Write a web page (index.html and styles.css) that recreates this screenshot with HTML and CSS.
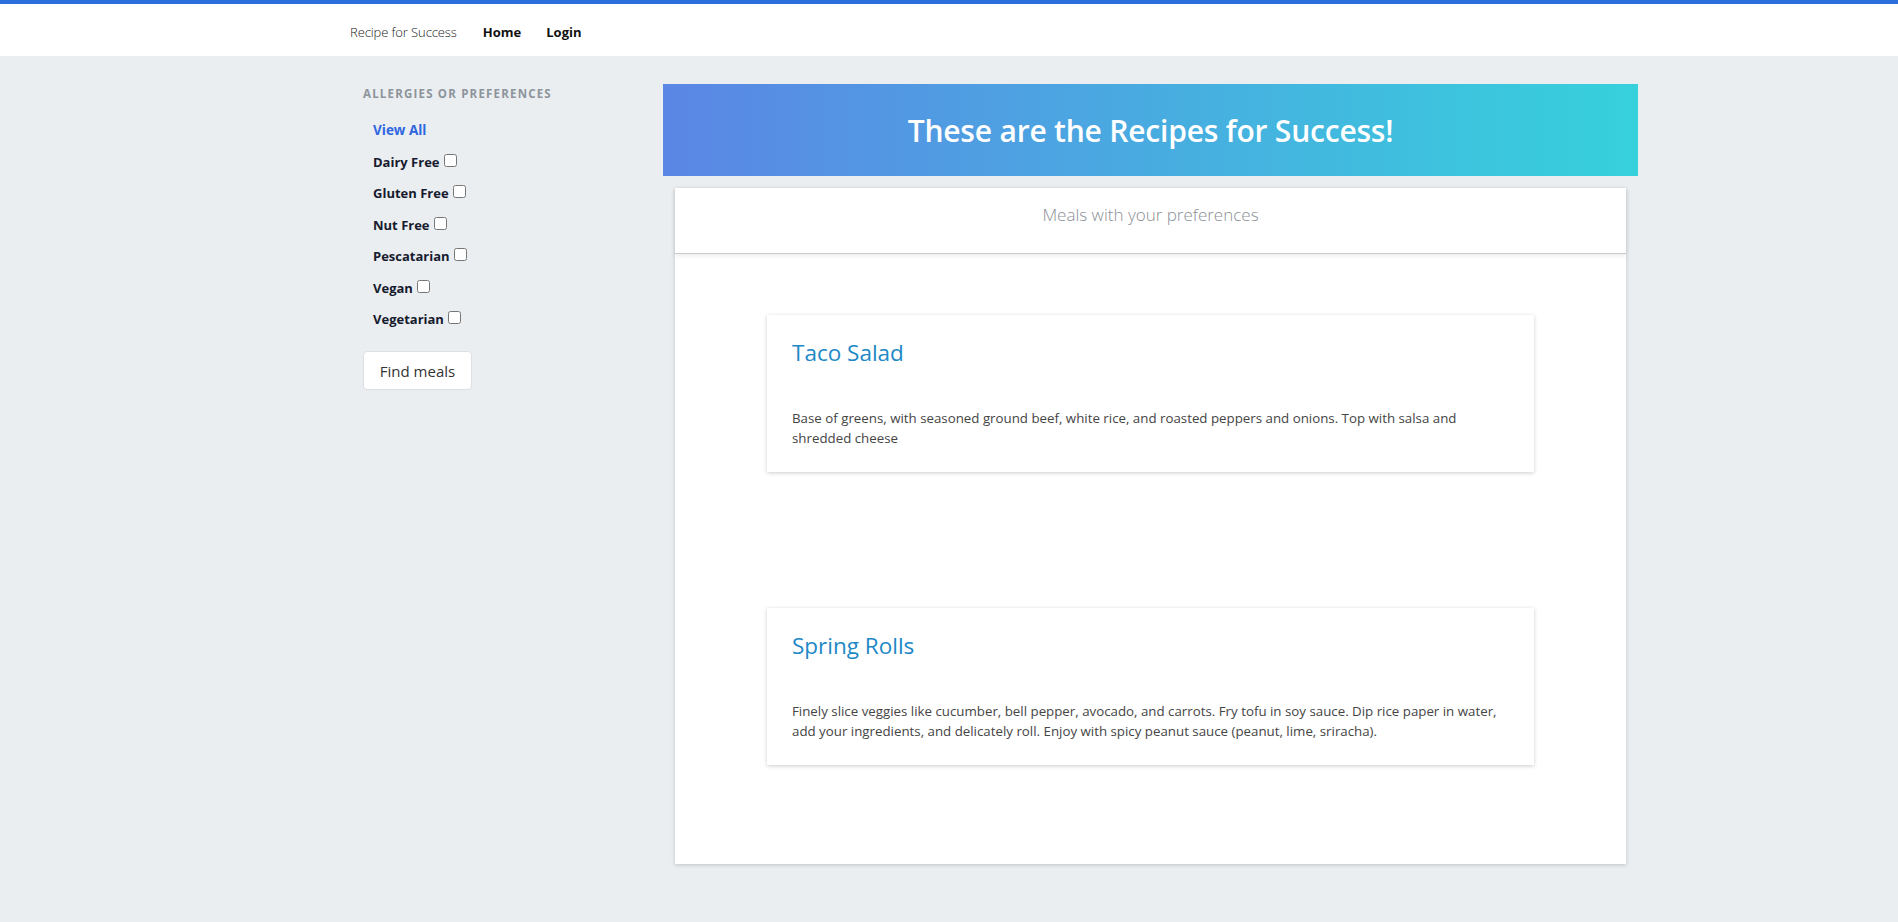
FILE: index.html
```html
<!DOCTYPE html>
<html lang="en">
<head>
<meta charset="utf-8">
<title>Recipe for Success</title>
<link rel="stylesheet" href="styles.css">
</head>
<body>
<div class="topbar"></div>
<nav class="nav">
  <a class="brand" href="#">Recipe for Success</a>
  <a class="nav-link" href="#">Home</a>
  <a class="nav-link" href="#">Login</a>
</nav>
<div class="layout">
  <aside class="sidebar">
    <h6 class="side-heading">ALLERGIES OR PREFERENCES</h6>
    <ul class="filters">
      <li><a class="view-all" href="#">View All</a></li>
      <li><label class="filter">Dairy Free<input type="checkbox"></label></li>
      <li><label class="filter">Gluten Free<input type="checkbox"></label></li>
      <li><label class="filter">Nut Free<input type="checkbox"></label></li>
      <li><label class="filter">Pescatarian<input type="checkbox"></label></li>
      <li><label class="filter">Vegan<input type="checkbox"></label></li>
      <li><label class="filter">Vegetarian<input type="checkbox"></label></li>
    </ul>
    <button class="find-btn" type="button">Find meals</button>
  </aside>
  <main class="main">
    <header class="banner">
      <h1 class="banner-title">These are the Recipes for Success!</h1>
    </header>
    <section class="results">
      <div class="results-header">Meals with your preferences</div>
      <div class="recipe-list">
        <article class="recipe">
          <h2 class="recipe-title">Taco Salad</h2>
          <p class="recipe-text">Base of greens, with seasoned ground beef, white rice, and roasted peppers and onions. Top with salsa and shredded cheese</p>
        </article>
        <article class="recipe">
          <h2 class="recipe-title">Spring Rolls</h2>
          <p class="recipe-text">Finely slice veggies like cucumber, bell pepper, avocado, and carrots. Fry tofu in soy sauce. Dip rice paper in water, add your ingredients, and delicately roll. Enjoy with spicy peanut sauce (peanut, lime, sriracha).</p>
        </article>
      </div>
    </section>
  </main>
</div>
</body>
</html>
```
FILE: styles.css
```css
* { box-sizing: border-box; }

html, body {
  margin: 0;
  padding: 0;
  background: #eaeef1;
}

body {
  font-family: "Open Sans", "Noto Sans", "Liberation Sans", sans-serif;
  color: #222;
  height: 922px;
  overflow: hidden;
}

.topbar {
  height: 4px;
  background: #2b6fdc;
}

.nav {
  height: 52px;
  background: #fff;
  display: flex;
  align-items: center;
  padding-top: 4px;
  padding-left: 350px;
}

.brand {
  font-size: 13px;
  font-weight: 300;
  color: #222;
  text-decoration: none;
  margin-right: 26px;
  letter-spacing: -0.1px;
}

.nav-link {
  font-size: 13px;
  font-weight: 700;
  color: #111;
  text-decoration: none;
  margin-right: 25px;
}

.layout {
  display: flex;
  padding-left: 350px;
  padding-top: 28px;
}

.sidebar {
  width: 313px;
  flex: none;
  padding-left: 13px;
}

.side-heading {
  margin: 2px 0 0;
  font-size: 11.5px;
  line-height: 15px;
  font-weight: 700;
  letter-spacing: 1.2px;
  color: #8d949b;
}

.filters {
  list-style: none;
  margin: 18px 0 0;
  padding: 0 0 0 10px;
  display: flex;
  flex-direction: column;
  gap: 11.5px;
}

.filters li {
  line-height: 20px;
  height: 20px;
}

.view-all {
  font-size: 13.5px;
  font-weight: 700;
  color: #2f66e0;
  text-decoration: none;
}

.filter {
  font-size: 13px;
  font-weight: 700;
  color: #161a2e;
  display: inline-flex;
  align-items: center;
}

.filter input {
  width: 13px;
  height: 13px;
  margin: 0 0 3px 4px;
}

.find-btn {
  margin-top: 23px;
  width: 109px;
  height: 39px;
  background: #fff;
  border: 1px solid #dcdfe3;
  border-radius: 4px;
  font-family: inherit;
  font-size: 15px;
  color: #333;
  padding: 0;
}

.main {
  width: 975px;
  flex: none;
}

.banner {
  height: 92px;
  background: linear-gradient(to right, #5b86e5, #36d1dc);
  display: flex;
  align-items: center;
  justify-content: center;
}

.banner-title {
  margin: 0;
  color: #fff;
  font-size: 30px;
  font-weight: 600;
  letter-spacing: -0.2px;
}

.results {
  margin: 12px 12px 0;
  height: 676px;
  background: #fff;
  box-shadow: 0 1px 4px rgba(0, 0, 0, 0.18);
}

.results-header {
  height: 66px;
  padding-top: 16px;
  text-align: center;
  font-size: 17px;
  font-weight: 300;
  line-height: 22px;
  color: #8a8f96;
  border-bottom: 1px solid #c9cbcd;
  box-shadow: 0 2px 5px rgba(0, 0, 0, 0.08);
}

.recipe-list {
  padding: 61px 92px 0;
  display: flex;
  flex-direction: column;
  gap: 136px;
}

.recipe {
  height: 157px;
  background: #fff;
  padding: 24px 25px 0 25px;
  box-shadow: 0 1px 4px rgba(0, 0, 0, 0.2);
}

.recipe-title {
  margin: 0;
  font-size: 22.5px;
  line-height: 28px;
  font-weight: 400;
  color: #2188c6;
}

.recipe-text {
  margin: 41px 0 0;
  font-size: 13.3px;
  line-height: 20px;
  color: #454545;
}
```
